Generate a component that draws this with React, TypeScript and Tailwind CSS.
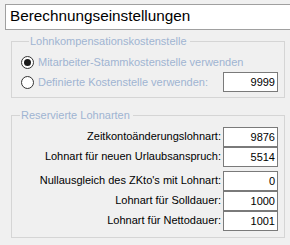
import React from "react";

function Field({ value }: { value: string }) {
  return (
    <div className="w-[55px] h-[20px] shrink-0 border border-[#7a7a7a] bg-white text-right pr-[2px] text-[11px] leading-[18px] text-black">
      {value}
    </div>
  );
}

function Radio({ checked }: { checked: boolean }) {
  return (
    <svg width="13" height="13" viewBox="0 0 13 13" className="shrink-0">
      <circle cx="6.5" cy="6.5" r="6" fill="#ffffff" stroke="#333333" strokeWidth="1" />
      {checked && <circle cx="6.5" cy="6.5" r="3.5" fill="#1a1a1a" />}
    </svg>
  );
}

function Row({ label, value }: { label: string; value: string }) {
  return (
    <div className="flex justify-end items-center gap-[2px] h-[20px]">
      <span className="text-[11px] leading-[13px] text-black pb-[1px] whitespace-nowrap">{label}</span>
      <Field value={value} />
    </div>
  );
}

export default function App() {
  return (
    <div className="w-[290px] h-[245px] bg-[#f0f0f0] overflow-hidden flex flex-col font-['Liberation_Sans',Arial,sans-serif]">
      <div className="mt-[4px] ml-[5px] h-[26px] border-y border-l border-[#a0a0a0] bg-white pl-[4px] pt-[2px] text-[15.3px] leading-[17px] text-black whitespace-nowrap">
        Berechnungseinstellungen
      </div>

      <fieldset className="mt-[5px] ml-[11px] w-[274px] border border-[#d5d5d5] pl-[9px] pr-[6px] pt-[4px] pb-[5px]">
        <legend className="ml-[8px] pl-[1px] pr-[3px] text-[11px] leading-[13px] text-[#9fb4d2] whitespace-nowrap">
          Lohnkompensationskostenstelle
        </legend>
        <div className="flex items-center h-[20px]">
          <Radio checked />
          <span className="ml-[4px] text-[11px] leading-[13px] text-[#9fb4d2] whitespace-nowrap">
            Mitarbeiter-Stammkostenstelle verwenden
          </span>
        </div>
        <div className="flex items-center h-[20px]">
          <Radio checked={false} />
          <span className="ml-[4px] text-[11px] leading-[13px] text-[#9fb4d2] whitespace-nowrap">
            Definierte Kostenstelle verwenden:
          </span>
          <div className="flex-1" />
          <Field value="9999" />
        </div>
      </fieldset>

      <fieldset className="mt-[11px] ml-[11px] w-[274px] border border-[#d5d5d5] pr-[6px] pt-[5px] pb-[6px]">
        <legend className="ml-[8px] pl-[1px] pr-[3px] text-[11px] leading-[13px] text-[#9fb4d2] whitespace-nowrap">
          Reservierte Lohnarten
        </legend>
        <div className="flex flex-col">
          <Row label="Zeitkontoänderungslohnart:" value="9876" />
          <Row label="Lohnart für neuen Urlaubsanspruch:" value="5514" />
        </div>
        <div className="flex flex-col mt-[4px]">
          <Row label="Nullausgleich des ZKto's mit Lohnart:" value="0" />
          <Row label="Lohnart für Solldauer:" value="1000" />
          <Row label="Lohnart für Nettodauer:" value="1001" />
        </div>
      </fieldset>
    </div>
  );
}
